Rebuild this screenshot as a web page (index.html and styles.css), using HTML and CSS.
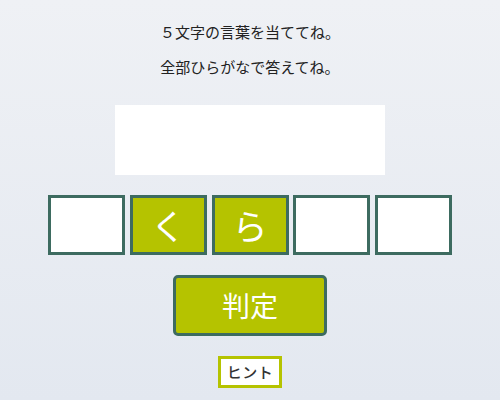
FILE: index.html
```html
<!DOCTYPE html>
<html lang="ja">
<head>
<meta charset="utf-8">
<link rel="stylesheet" href="styles.css">
</head>
<body>
<main class="game">
  <p class="msg msg-first">５文字の言葉を当ててね。</p>
  <p class="msg">全部ひらがなで答えてね。</p>
  <div class="answer"></div>
  <div class="tiles">
    <div class="tile"></div>
    <div class="tile filled">く</div>
    <div class="tile filled">ら</div>
    <div class="tile"></div>
    <div class="tile"></div>
  </div>
  <button class="judge">判定</button>
  <button class="hint">ヒント</button>
</main>
</body>
</html>
```
FILE: styles.css
```css
html, body {
  margin: 0;
  height: 100%;
}
body {
  background: linear-gradient(180deg, #eff1f5 0%, #e3e8f0 100%);
  font-family: "Noto Sans CJK JP", "Noto Sans", sans-serif;
  color: #222;
}
.game {
  display: flex;
  flex-direction: column;
  align-items: center;
  padding-top: 22px;
}
.msg {
  margin: 0;
  font-size: 15px;
  line-height: 20px;
  height: 20px;
}
.msg-first {
  margin-bottom: 14.5px;
}
.answer {
  margin-top: 28px;
  width: 270px;
  height: 70px;
  background: #fff;
}
.tiles {
  margin-top: 20px;
  display: flex;
  gap: 4.75px;
}
.tile {
  box-sizing: border-box;
  width: 77px;
  height: 60px;
  border: 3px solid #3d6b60;
  background: #fff;
  display: flex;
  align-items: center;
  justify-content: center;
  color: #fff;
  font-size: 35px;
  font-weight: 400;
  line-height: 1;
}
.tile.filled {
  background: #b5c300;
}
.judge {
  margin-top: 20px;
  box-sizing: border-box;
  width: 154px;
  height: 61px;
  border: 3px solid #3d6b60;
  border-radius: 5px;
  background: #b5c300;
  color: #fff;
  font-family: inherit;
  font-size: 28px;
  line-height: 1;
  padding: 0;
}
.hint {
  margin-top: 20px;
  box-sizing: border-box;
  width: 64px;
  height: 32px;
  border: 3px solid #b5c300;
  background: #fff;
  color: #333;
  font-family: inherit;
  font-size: 15px;
  font-weight: 500;
  padding: 0;
  letter-spacing: 0.5px;
}
```
